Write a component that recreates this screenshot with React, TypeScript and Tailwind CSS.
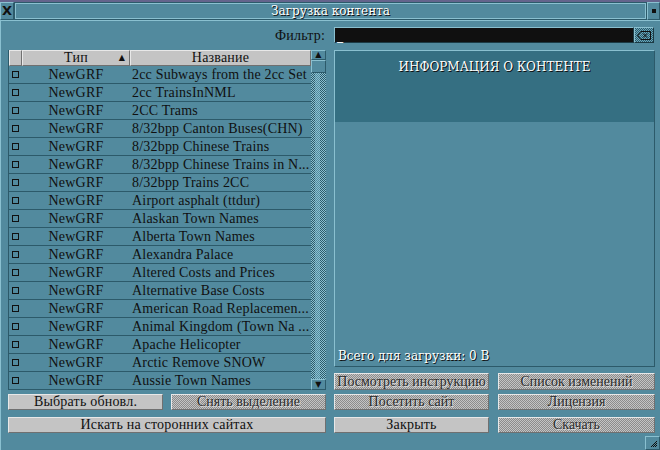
import React from 'react'

const rows: string[] = [
  '2cc Subways from the 2cc Set',
  '2cc TrainsInNML',
  '2CC Trams',
  '8/32bpp Canton Buses(CHN)',
  '8/32bpp Chinese Trains',
  '8/32bpp Chinese Trains in N...',
  '8/32bpp Trains 2CC',
  'Airport asphalt (ttdur)',
  'Alaskan Town Names',
  'Alberta Town Names',
  'Alexandra Palace',
  'Altered Costs and Prices',
  'Alternative Base Costs',
  'American Road Replacemen...',
  'Animal Kingdom (Town Na ...',
  'Apache Helicopter',
  'Arctic Remove SNOW',
  'Aussie Town Names',
]

const checker = 'bg-[repeating-conic-gradient(#c4c4c4_0_25%,#8c8c8c_0_50%)] bg-[length:2px_2px]'

const Btn: React.FC<{ label: string; disabled?: boolean; className?: string }> = ({ label, disabled, className }) => (
  <div
    className={
      'flex items-center justify-center whitespace-nowrap overflow-hidden border border-t-[#e8e8e8] border-l-[#e8e8e8] border-r-[#707070] border-b-[#707070] leading-none ' +
      (disabled ? checker + ' text-[#1c1c1c] tracking-normal ' : 'bg-[#c4c4c4] text-[#101010] ') +
      (className ?? '')
    }
  >
    <span className={disabled ? 'opacity-90 [text-shadow:1px_1px_0_#e0e0e0]' : ''}>{label}</span>
  </div>
)

export default function App() {
  return (
    <div className="w-[660px] h-[450px] bg-[#528a9e] overflow-hidden flex flex-col text-[14px] tracking-[0.2px] [font-family:'Liberation_Serif',serif]">
      {/* strip of the window behind */}
      <div className="h-[2px] bg-[#64648c] shrink-0" />

      {/* title bar */}
      <div className="h-[18px] flex shrink-0">
        <div className="w-[14px] border border-[#8ac0d0] border-r-[#2c5a6a] border-b-[#2c5a6a] flex items-center justify-center text-[#101010] text-[13px] font-bold [font-family:'DejaVu_Sans',sans-serif]">
          X
        </div>
        <div className="flex-1 border border-[#2c5a6a] flex items-center justify-center">
          <div className="flex-1 h-full border border-[#8ac0d0] flex items-center justify-center text-white text-[12px] tracking-normal [font-family:'DejaVu_Serif',serif] [text-shadow:1px_1px_0_#101010]">
            Загрузка контента
          </div>
        </div>
        <div className="w-[13px] border border-[#8ac0d0] border-r-[#2c5a6a] border-b-[#2c5a6a] flex items-center justify-center">
          <div className="w-[4px] h-[4px] bg-[#101010]" />
        </div>
      </div>

      {/* window body */}
      <div className="flex-1 flex flex-col border-t border-l border-t-[#8ac0d0] border-l-[#8ac0d0] relative">
        {/* filter */}
        <div className="flex items-center h-[16px] mt-[6px] ml-[7px]">
          <div className="w-[318px] text-right pr-px text-[#101010]">Фильтр:</div>
          <div className="ml-[8px] w-[300px] h-[16px] bg-[#101010] border border-[#8ac0d0] border-r-[#1c3a44] border-b-[#1c3a44] text-white flex items-end px-[2px] leading-none text-[12px] [font-family:'DejaVu_Sans',sans-serif]">
            _
          </div>
          <div className="w-[20px] h-[16px] bg-[repeating-conic-gradient(#6aa8bc_0_25%,#2c5a6a_0_50%)] bg-[length:2px_2px] border border-[#8ac0d0] border-r-[#1c3a44] border-b-[#1c3a44] flex items-center justify-center">
            <svg width="14" height="9" viewBox="0 0 14 9">
              <path d="M0.5 4.5 L4 0.5 H13.5 V8.5 H4 Z" fill="none" stroke="#101010" />
              <path d="M6 2.5 L10 6.5 M10 2.5 L6 6.5" stroke="#101010" />
            </svg>
          </div>
        </div>

        <div className="flex mt-[7px] ml-[7px] gap-[8px]">
          {/* left column */}
          <div className="w-[318px] flex flex-col">
            <div className="flex h-[340px]">
              <div className="w-[303px] flex flex-col border-l border-[#2c5a6a]">
                {/* header */}
                <div className="flex h-[16px] text-[#101010] leading-none">
                  <div className="w-[13px] bg-[#c4c4c4] border border-t-[#e8e8e8] border-l-[#e8e8e8] border-r-[#707070] border-b-[#707070]" />
                  <div className="w-[108px] bg-[#c4c4c4] border border-t-[#e8e8e8] border-l-[#e8e8e8] border-r-[#707070] border-b-[#707070] flex items-center justify-center relative">
                    Тип
                    <span className="absolute right-[4px] top-[3px] text-[8px] [font-family:'DejaVu_Sans',sans-serif]">▲</span>
                  </div>
                  <div className="flex-1 bg-[#c4c4c4] border border-t-[#e8e8e8] border-l-[#e8e8e8] border-r-[#707070] border-b-[#707070] flex items-center justify-center">
                    Название
                  </div>
                </div>
                {rows.map((name) => (
                  <div key={name} className="flex h-[18px] items-center border-b border-[#2c5a6a] text-[#101010] leading-none">
                    <div className="w-[13px] flex justify-center">
                      <div className="w-[7px] h-[7px] border border-[#101010]" />
                    </div>
                    <div className="w-[108px] text-center">NewGRF</div>
                    <div className="flex-1 pl-[2px] whitespace-nowrap">{name}</div>
                  </div>
                ))}
              </div>
              {/* scrollbar */}
              <div className="w-[15px] flex flex-col">
                <div className="h-[10px] bg-[#528a9e] border border-[#8ac0d0] border-r-[#2c5a6a] border-b-[#2c5a6a] flex items-center justify-center">
                  <span className="text-[8px] leading-none text-[#101010] [font-family:'DejaVu_Sans',sans-serif]">▲</span>
                </div>
                <div className="h-[13px] bg-[#528a9e] border border-[#8ac0d0] border-r-[#2c5a6a] border-b-[#2c5a6a]" />
                <div className="flex-1 flex bg-[repeating-conic-gradient(#8ac0d0_0_25%,#2c5a6a_0_50%)] bg-[length:2px_2px]">
                  <div className="w-[4px]" />
                  <div className="w-[5px] bg-[repeating-conic-gradient(#8ac0d0_0_25%,#528a9e_0_50%)] bg-[length:2px_2px]" />
                  <div className="flex-1" />
                </div>
                <div className="h-[11px] bg-[#528a9e] border border-[#8ac0d0] border-r-[#2c5a6a] border-b-[#2c5a6a] flex items-center justify-center">
                  <span className="text-[8px] leading-none text-[#101010] [font-family:'DejaVu_Sans',sans-serif]">▼</span>
                </div>
              </div>
            </div>
            <div className="flex gap-[8px] mt-[4px]">
              <Btn label="Выбрать обновл." className="w-[155px] h-[16px]" />
              <Btn label="Снять выделение" disabled className="w-[155px] h-[16px]" />
            </div>
            <Btn label="Искать на сторонних сайтах" className="w-[318px] h-[16px] mt-[7px]" />
          </div>

          {/* right column */}
          <div className="w-[321px] flex flex-col">
            <div className="h-[317px] border border-[#8ac0d0] border-r-[#2c5a6a] border-b-[#2c5a6a] flex flex-col">
              <div className="h-[71px] bg-[#356f82] flex justify-center pt-[10px] text-white text-[12px] leading-none tracking-normal [font-family:'DejaVu_Serif',serif] [text-shadow:1px_1px_0_#101010]">
                ИНФОРМАЦИЯ О КОНТЕНТЕ
              </div>
              <div className="flex-1" />
              <div className="pl-[3px] pb-[4px] text-white text-[12px] leading-none tracking-normal [font-family:'DejaVu_Serif',serif] [text-shadow:1px_1px_0_#101010]">
                Всего для загрузки: 0 B
              </div>
            </div>
            <div className="flex gap-[9px] mt-[6px]">
              <Btn label="Посмотреть инструкцию" disabled className="w-[155px] h-[17px]" />
              <Btn label="Список изменений" disabled className="flex-1 h-[17px]" />
            </div>
            <div className="flex gap-[9px] mt-[4px]">
              <Btn label="Посетить сайт" disabled className="w-[155px] h-[16px]" />
              <Btn label="Лицензия" disabled className="flex-1 h-[16px]" />
            </div>
            <div className="flex gap-[9px] mt-[7px]">
              <Btn label="Закрыть" className="w-[155px] h-[16px]" />
              <Btn label="Скачать" disabled className="flex-1 h-[16px]" />
            </div>
          </div>
        </div>

        {/* resize box */}
        <div className="absolute right-0 bottom-0 w-[15px] h-[14px] border border-[#8ac0d0] border-r-[#2c5a6a] border-b-[#2c5a6a] flex items-end justify-end p-[1px]">
          <svg width="8" height="8" viewBox="0 0 8 8">
            <path d="M7 1 L1 7 M7 3 L3 7 M7 5 L5 7" stroke="#101010" />
          </svg>
        </div>
      </div>
    </div>
  )
}
